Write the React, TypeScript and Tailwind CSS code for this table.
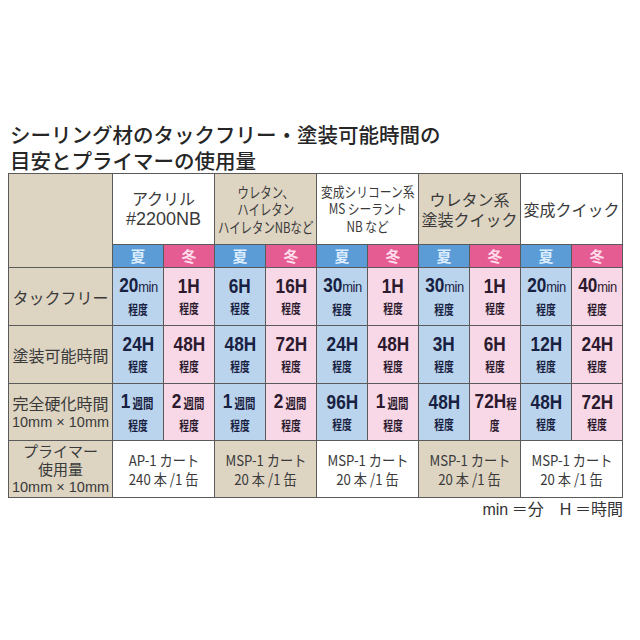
import React from "react";

const JP = "font-['Noto_Sans_CJK_JP','Noto_Sans',sans-serif]";
const NUM = "font-['Liberation_Sans','Noto_Sans_CJK_JP',sans-serif]";

type V = { n: string; u?: string; big?: boolean; special?: boolean };

const tack: V[] = [
  { n: "20", u: "min" }, { n: "1H", big: true }, { n: "6H", big: true }, { n: "16H", big: true },
  { n: "30", u: "min" }, { n: "1H", big: true }, { n: "30", u: "min" }, { n: "1H", big: true },
  { n: "20", u: "min" }, { n: "40", u: "min" },
];
const paint: V[] = ["24H", "48H", "48H", "72H", "24H", "48H", "3H", "6H", "12H", "24H"].map((n) => ({ n, big: true }));
const cure: V[] = [
  { n: "1", u: "週間" }, { n: "2", u: "週間" }, { n: "1", u: "週間" }, { n: "2", u: "週間" },
  { n: "96H", big: true }, { n: "1", u: "週間" }, { n: "48H", big: true }, { n: "72H", special: true },
  { n: "48H", big: true }, { n: "72H", big: true },
];

const bord = "border-r border-b border-[#5a5a5a]";

function ValCell({ v, i }: { v: V; i: number }) {
  const blue = i % 2 === 0;
  const bg = blue ? "bg-[#bad4ee]" : "bg-[#f8d7e6]";
  const col = blue ? "text-[#182141]" : "text-[#2c1a2e]";
  return (
    <div className={`${bord} ${bg} ${col} flex flex-col items-center justify-center`}>
      <div className="flex items-baseline justify-center whitespace-nowrap leading-[22px]">
        <span className={`${NUM} text-[20px] font-bold inline-block scale-x-[0.86] origin-center`}>
          {v.n}
          {v.u === "min" && <span className="text-[15px] font-normal tracking-[-0.5px]">min</span>}
        </span>
        {v.u === "週間" && (
          <span className={`${JP} text-[13px] font-bold inline-block scale-x-[0.8] -ml-[1px]`}>週間</span>
        )}
        {v.special && <span className={`${JP} text-[13px] font-bold inline-block scale-x-[0.8] -ml-[3px]`}>程</span>}
      </div>
      <div className={`${JP} text-[13px] font-bold inline-block scale-x-[0.75] leading-[20px] mt-[1px]`}>
        {v.special ? "度" : "程度"}
      </div>
    </div>
  );
}

export default function App() {
  const heads: { bg: string; content: React.ReactNode }[] = [
    {
      bg: "bg-white",
      content: (
        <div className={`${JP} text-[16px] leading-[19px] text-[#3a3a3a] text-center`}>
          アクリル
          <br />
          <span className={NUM + " text-[18px] leading-[22px]"}>#2200NB</span>
        </div>
      ),
    },
    {
      bg: "bg-[#ddd4c2]",
      content: (
        <div className={`${JP} text-[15px] leading-[17.5px] text-[#3a3a3a] text-center whitespace-nowrap inline-block scale-x-[0.76]`}>
          ウレタン、
          <br />
          ハイレタン
          <br />
          ハイレタンNBなど
        </div>
      ),
    },
    {
      bg: "bg-white",
      content: (
        <div className={`${JP} text-[14px] leading-[17.5px] text-[#3a3a3a] text-center whitespace-nowrap inline-block scale-x-[0.84]`}>
          変成シリコーン系
          <br />
          MS シーラント
          <br />
          NB など
        </div>
      ),
    },
    {
      bg: "bg-[#ddd4c2]",
      content: (
        <div className={`${JP} text-[16px] leading-[20px] text-[#3a3a3a] text-center whitespace-nowrap`}>
          ウレタン系
          <br />
          塗装クイック
        </div>
      ),
    },
    {
      bg: "bg-white",
      content: <div className={`${JP} text-[16px] text-[#3a3a3a] whitespace-nowrap`}>変成クイック</div>,
    },
  ];

  const labelCls = `${bord} bg-[#ddd4c2] flex flex-col items-center justify-center text-[#3a3a3a] ${JP}`;

  return (
    <div className="w-[640px] h-[640px] bg-white pt-[121px] pl-[8px]">
      <div className={`${JP} text-[20.5px] leading-[26px] font-medium text-[#262626] pl-[2px] mb-[0px]`}>
        シーリング材のタックフリー・塗装可能時間の
        <br />
        目安とプライマーの使用量
      </div>
      <div className="grid grid-cols-[104px_repeat(10,51px)] grid-rows-[71px_23px_58px_58px_57px_57px] border-l border-t border-[#5a5a5a] w-[615px]">
        <div className={`${bord} bg-[#ddd4c2] row-span-2`} />
        {heads.map((h, i) => (
          <div key={i} className={`${bord} ${h.bg} col-span-2 flex items-center justify-center`}>
            {h.content}
          </div>
        ))}
        {Array.from({ length: 10 }).map((_, i) => (
          <div
            key={"s" + i}
            className={`${bord} ${i % 2 === 0 ? "bg-[#5b9cd7] text-[#dcedff]" : "bg-[#e45c92] text-[#ffdcea]"} ${JP} text-[15px] font-bold flex items-center justify-center`}
          >
            {i % 2 === 0 ? "夏" : "冬"}
          </div>
        ))}
        <div className={`${labelCls} text-[16px]`}>タックフリー</div>
        {tack.map((v, i) => (
          <ValCell key={"t" + i} v={v} i={i} />
        ))}
        <div className={`${labelCls} text-[16px]`}>塗装可能時間</div>
        {paint.map((v, i) => (
          <ValCell key={"p" + i} v={v} i={i} />
        ))}
        <div className={`${labelCls} text-[16px] leading-[20px]`}>
          <span>完全硬化時間</span>
          <span className={NUM + " text-[14.5px] leading-[19px] whitespace-nowrap"}>10mm × 10mm</span>
        </div>
        {cure.map((v, i) => (
          <ValCell key={"c" + i} v={v} i={i} />
        ))}
        <div className={`${labelCls} text-[15px] leading-[18px]`}>
          <span>プライマー</span>
          <span>使用量</span>
          <span className={NUM + " text-[14.5px] leading-[19px] whitespace-nowrap"}>10mm × 10mm</span>
        </div>
        {[
          ["AP-1 カート", "240 本 /1 缶", "bg-white"],
          ["MSP-1 カート", "20 本 /1 缶", "bg-[#ddd4c2]"],
          ["MSP-1 カート", "20 本 /1 缶", "bg-white"],
          ["MSP-1 カート", "20 本 /1 缶", "bg-[#ddd4c2]"],
          ["MSP-1 カート", "20 本 /1 缶", "bg-white"],
        ].map(([a, b, bg], i) => (
          <div key={"pr" + i} className={`${bord} ${bg} col-span-2 flex flex-col items-center justify-center ${JP} text-[#3a3a3a]`}>
            <span className="text-[15px] leading-[19px] whitespace-nowrap inline-block scale-x-[0.88]">{a}</span>
            <span className="text-[15px] leading-[19px] whitespace-nowrap inline-block scale-x-[0.88]">{b}</span>
          </div>
        ))}
      </div>
      <div className={`w-[615px] text-right ${JP} text-[16px] leading-[22px] text-[#333] -mt-[1px]`}>
        <span className={NUM}>min</span> ＝分　<span className={NUM}>H</span> ＝時間
      </div>
    </div>
  );
}
